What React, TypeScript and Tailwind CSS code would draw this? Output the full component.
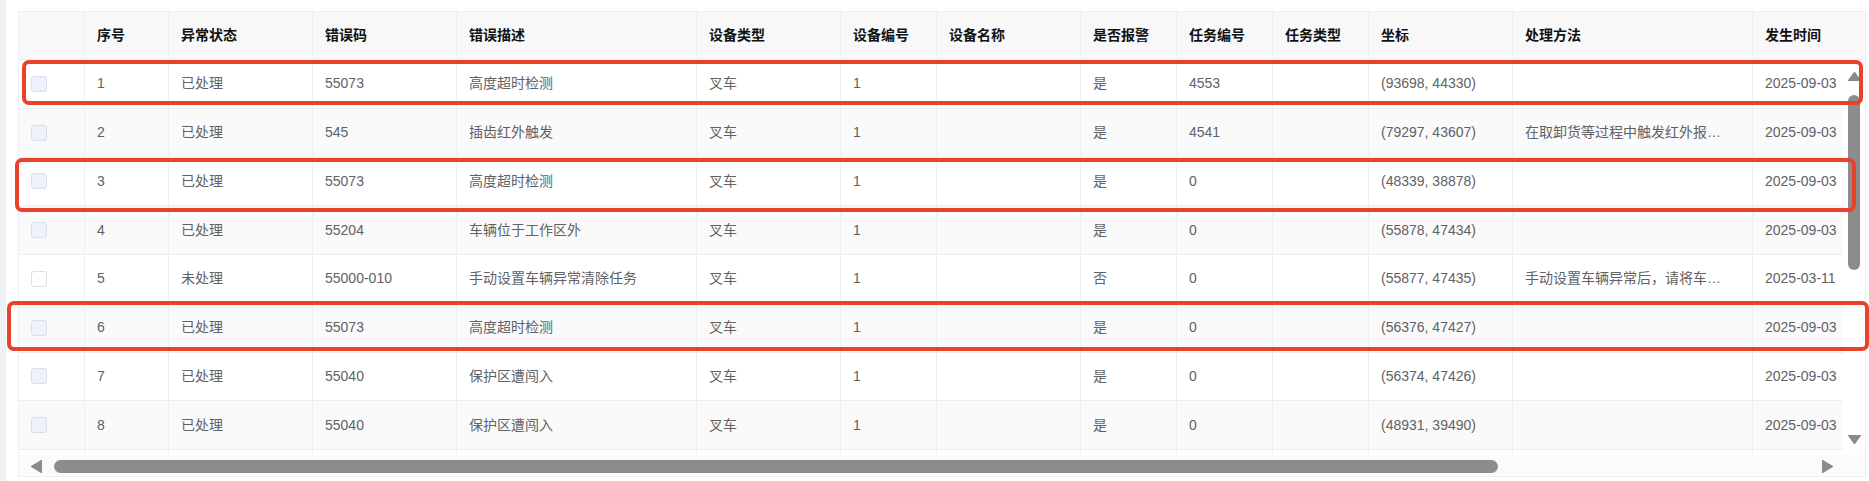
import React from "react"

type Col = { key: string; title: string; w: string }

const cols: Col[] = [
  { key: "no", title: "序号", w: "w-[84px]" },
  { key: "status", title: "异常状态", w: "w-[144px]" },
  { key: "code", title: "错误码", w: "w-[144px]" },
  { key: "desc", title: "错误描述", w: "w-[240px]" },
  { key: "devType", title: "设备类型", w: "w-[144px]" },
  { key: "devNo", title: "设备编号", w: "w-[96px]" },
  { key: "devName", title: "设备名称", w: "w-[144px]" },
  { key: "alarm", title: "是否报警", w: "w-[96px]" },
  { key: "taskNo", title: "任务编号", w: "w-[96px]" },
  { key: "taskType", title: "任务类型", w: "w-[96px]" },
  { key: "pos", title: "坐标", w: "w-[144px]" },
  { key: "method", title: "处理方法", w: "w-[240px]" },
  { key: "time", title: "发生时间", w: "w-[200px]" },
]

type Row = Record<string, string> & { enabled?: string }

const rows: Row[] = [
  { no: "1", status: "已处理", code: "55073", desc: "高度超时检测", devType: "叉车", devNo: "1", devName: "", alarm: "是", taskNo: "4553", taskType: "", pos: "(93698, 44330)", method: "", time: "2025-09-03" },
  { no: "2", status: "已处理", code: "545", desc: "插齿红外触发", devType: "叉车", devNo: "1", devName: "", alarm: "是", taskNo: "4541", taskType: "", pos: "(79297, 43607)", method: "在取卸货等过程中触发红外报警，请检查货物位置", time: "2025-09-03" },
  { no: "3", status: "已处理", code: "55073", desc: "高度超时检测", devType: "叉车", devNo: "1", devName: "", alarm: "是", taskNo: "0", taskType: "", pos: "(48339, 38878)", method: "", time: "2025-09-03" },
  { no: "4", status: "已处理", code: "55204", desc: "车辆位于工作区外", devType: "叉车", devNo: "1", devName: "", alarm: "是", taskNo: "0", taskType: "", pos: "(55878, 47434)", method: "", time: "2025-09-03" },
  { no: "5", status: "未处理", code: "55000-010", desc: "手动设置车辆异常清除任务", devType: "叉车", devNo: "1", devName: "", alarm: "否", taskNo: "0", taskType: "", pos: "(55877, 47435)", method: "手动设置车辆异常后，请将车辆移至安全区域", time: "2025-03-11", enabled: "1" },
  { no: "6", status: "已处理", code: "55073", desc: "高度超时检测", devType: "叉车", devNo: "1", devName: "", alarm: "是", taskNo: "0", taskType: "", pos: "(56376, 47427)", method: "", time: "2025-09-03" },
  { no: "7", status: "已处理", code: "55040", desc: "保护区遭闯入", devType: "叉车", devNo: "1", devName: "", alarm: "是", taskNo: "0", taskType: "", pos: "(56374, 47426)", method: "", time: "2025-09-03" },
  { no: "8", status: "已处理", code: "55040", desc: "保护区遭闯入", devType: "叉车", devNo: "1", devName: "", alarm: "是", taskNo: "0", taskType: "", pos: "(48931, 39490)", method: "", time: "2025-09-03" },
  { no: "9", status: "已处理", code: "55040", desc: "保护区遭闯入", devType: "叉车", devNo: "1", devName: "", alarm: "是", taskNo: "0", taskType: "", pos: "(48930, 39491)", method: "", time: "2025-09-03" },
]

function Checkbox({ enabled }: { enabled?: boolean }) {
  return (
    <span
      className={
        enabled
          ? "h-[16px] w-[16px] rounded-[3px] border border-[#dcdfe6] bg-white"
          : "h-[16px] w-[16px] rounded-[3px] border border-[#d9dee8] bg-[#edf2fc]"
      }
    />
  )
}

function Arrow({ dir }: { dir: "up" | "down" | "left" | "right" }) {
  const pts = {
    up: "0,9 6.5,0 13,9",
    down: "0,0 13,0 6.5,9",
    left: "11,0 11,13 0,6.5",
    right: "0,0 0,13 11,6.5",
  }[dir]
  const vertical = dir === "up" || dir === "down"
  return (
    <svg width={vertical ? 13 : 11} height={vertical ? 9 : 13} viewBox={vertical ? "0 0 13 9" : "0 0 11 13"} className="shrink-0">
      <polygon points={pts} fill="#8a8a8a" stroke="#8a8a8a" strokeWidth="1" strokeLinejoin="round" />
    </svg>
  )
}

export default function App() {
  return (
    <div className="relative flex h-[481px] w-[1869px] overflow-hidden bg-white font-['Liberation_Sans','Noto_Sans_CJK_SC',sans-serif] text-[14px]">
      <div className="w-[6px] shrink-0 bg-[#eff1f5]" />

      <div className="flex-1 pl-[12px] pt-[11px]">
        <div className="flex h-[466px] w-[1848px] flex-col border border-[#ebeef5]">
          {/* header */}
          <div className="flex h-[48px] shrink-0 overflow-hidden border-b border-[#ebeef5] bg-[#f8f8f9]">
            <div className="w-[66px] shrink-0 border-r border-[#ebeef5]" />
            {cols.map((c, i) => (
              <div
                key={c.key}
                className={`${c.w} flex shrink-0 items-center px-[12px] font-bold text-[#111] ${i < cols.length - 1 ? "border-r border-[#ebeef5]" : ""}`}
              >
                {c.title}
              </div>
            ))}
          </div>

          {/* body */}
          <div className="flex h-[395px] shrink-0">
            <div className="flex w-[1824px] flex-col overflow-hidden">
              {rows.map((r, ri) => (
                <div
                  key={r.no}
                  className={`flex h-[48.75px] shrink-0 border-b border-[#ebeef5] ${ri % 2 === 1 ? "bg-[#fafafa]" : "bg-white"}`}
                >
                  <div className="flex w-[66px] shrink-0 items-center border-r border-[#ebeef5] pl-[12px]">
                    <Checkbox enabled={!!r.enabled} />
                  </div>
                  {cols.map((c) => (
                    <div
                      key={c.key}
                      className={`${c.w} flex shrink-0 items-center overflow-hidden border-r border-[#ebeef5] px-[12px] text-[#606266]`}
                    >
                      <span className={c.key === "method" ? "w-[204px] truncate" : "whitespace-nowrap"}>{r[c.key]}</span>
                    </div>
                  ))}
                </div>
              ))}
            </div>

            {/* vertical scrollbar */}
            <div className="flex w-[22px] shrink-0 flex-col items-center bg-white pb-[11px] pt-[12px]">
              <Arrow dir="up" />
              <div className="mt-[14px] h-[175px] w-[12px] rounded-full bg-[#8c8c8c]" />
              <div className="flex-1" />
              <Arrow dir="down" />
            </div>
          </div>

          {/* horizontal scrollbar */}
          <div className="flex h-[21px] shrink-0 items-center bg-[#fbfbfb] pl-[12px] pr-[32px] pt-[1px]">
            <Arrow dir="left" />
            <div className="ml-[12px] h-[13px] w-[1444px] rounded-full bg-[#8c8c8c]" />
            <div className="flex-1" />
            <Arrow dir="right" />
          </div>
        </div>
      </div>

      {/* red annotation boxes */}
      <div className="pointer-events-none absolute left-[22px] top-[60px] h-[45px] w-[1841px] rounded-[7px] border-[4px] border-[#e8412c]" />
      <div className="pointer-events-none absolute left-[15px] top-[158px] h-[54px] w-[1841px] rounded-[7px] border-[4px] border-[#e8412c]" />
      <div className="pointer-events-none absolute left-[7px] top-[301px] h-[50px] w-[1862px] rounded-[7px] border-[4px] border-[#e8412c]" />
    </div>
  )
}
